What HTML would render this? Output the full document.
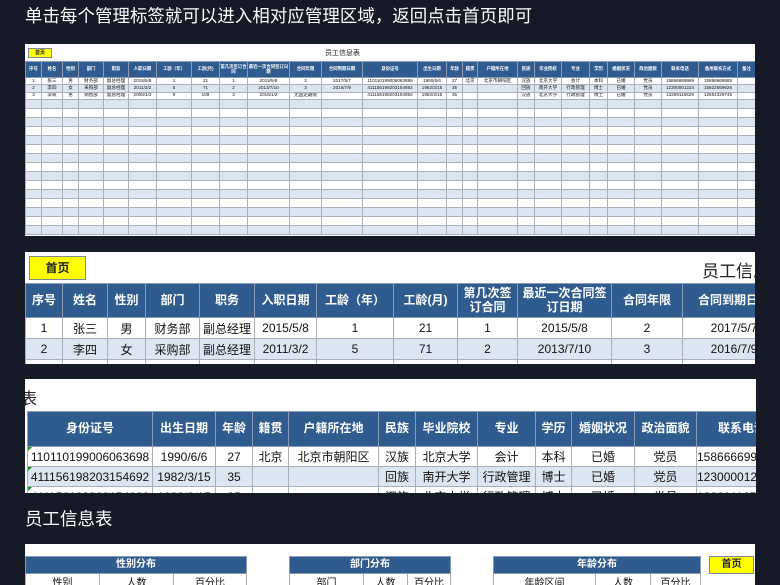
<!DOCTYPE html>
<html><head><meta charset="utf-8">
<style>
*{margin:0;padding:0;box-sizing:border-box}
body{width:780px;height:585px;overflow:hidden;background:#161a26;font-family:"Liberation Sans","Noto Sans CJK SC",sans-serif;position:relative}
.h{position:absolute;color:#fff;font-size:17.4px;white-space:nowrap;letter-spacing:0.1px}
.p{position:absolute;background:#fff;overflow:hidden}
table{border-collapse:collapse;table-layout:fixed;position:absolute}
td,th{border:1px solid #a9b0bb;text-align:center;white-space:nowrap;overflow:hidden;color:#111}
th{background:#2f5b8f;color:#fff;font-weight:bold;border-color:#8a9bb3;white-space:normal;line-height:1.15}
tr.b td{background:#dce6f1}
.btn{position:absolute;background:#ffff00;border:1px solid #7d8a9a;text-align:center;font-weight:bold;color:#222}
.t1 td,.t1 th{font-size:4.6px;padding:0;line-height:1}
.t1 th{font-size:4.4px}
.t2 td,.t2 th{font-size:12px;padding:0}
.tri{position:absolute;width:0;height:0;border-top:4px solid #1a8a2a;border-right:4px solid transparent}
</style></head><body>
<div class="h" style="left:25px;top:3px">单击每个管理标签就可以进入相对应管理区域，返回点击首页即可</div>

<div class="p" style="left:25px;top:44px;width:730px;height:192px">
<div class="btn" style="left:3px;top:4px;width:24px;height:10px;font-size:5px;line-height:8px">首页</div>
<div style="position:absolute;left:300px;top:4px;font-size:7px;color:#222">员工信息表</div>
<table class="t1" style="left:0;top:17px;width:730px">
<colgroup><col style="width:16px"><col style="width:21px"><col style="width:16px"><col style="width:25px"><col style="width:25px"><col style="width:28px"><col style="width:35px"><col style="width:28px"><col style="width:28px"><col style="width:42px"><col style="width:32px"><col style="width:41px"><col style="width:55px"><col style="width:29px"><col style="width:16px"><col style="width:15px"><col style="width:40px"><col style="width:17px"><col style="width:27px"><col style="width:28px"><col style="width:18px"><col style="width:27px"><col style="width:27px"><col style="width:37px"><col style="width:39px"><col style="width:18px"></colgroup>
<tr style="height:16px"><th>序号</th><th>姓名</th><th>性别</th><th>部门</th><th>职务</th><th>入职日期</th><th>工龄（年）</th><th>工龄(月)</th><th>第几次签订合同</th><th>最近一次合同签订日期</th><th>合同年限</th><th>合同到期日期</th><th>身份证号</th><th>出生日期</th><th>年龄</th><th>籍贯</th><th>户籍所在地</th><th>民族</th><th>毕业院校</th><th>专业</th><th>学历</th><th>婚姻状况</th><th>政治面貌</th><th>联系电话</th><th>备用联系方式</th><th>备注</th></tr>
<tr style="height:7.3px"><td>1</td><td>张三</td><td>男</td><td>财务部</td><td>副总经理</td><td>2015/5/8</td><td>1</td><td>21</td><td>1</td><td>2015/5/8</td><td>2</td><td>2017/5/7</td><td>110110199006063698</td><td>1990/6/6</td><td>27</td><td>北京</td><td>北京市朝阳区</td><td>汉族</td><td>北京大学</td><td>会计</td><td>本科</td><td>已婚</td><td>党员</td><td>15866669999</td><td>15866668888</td><td></td></tr>
<tr class="b" style="height:7.3px"><td>2</td><td>李四</td><td>女</td><td>采购部</td><td>副总经理</td><td>2011/3/2</td><td>5</td><td>71</td><td>2</td><td>2013/7/10</td><td>3</td><td>2016/7/9</td><td>411156198203154692</td><td>1982/3/15</td><td>35</td><td></td><td></td><td>回族</td><td>南开大学</td><td>行政管理</td><td>博士</td><td>已婚</td><td>党员</td><td>12300001234</td><td>15622569626</td><td></td></tr>
<tr style="height:7.3px"><td>3</td><td>李筱</td><td>男</td><td>销售部</td><td>副总经理</td><td>2008/1/2</td><td>9</td><td>109</td><td>3</td><td>2016/1/2</td><td>无固定期限</td><td></td><td>411156198203154692</td><td>1982/3/15</td><td>35</td><td></td><td></td><td>汉族</td><td>北京大学</td><td>行政管理</td><td>博士</td><td>已婚</td><td>党员</td><td>13269116529</td><td>12654329745</td><td></td></tr>
<tr class="b" style="height:9px"><td></td><td></td><td></td><td></td><td></td><td></td><td></td><td></td><td></td><td></td><td></td><td></td><td></td><td></td><td></td><td></td><td></td><td></td><td></td><td></td><td></td><td></td><td></td><td></td><td></td><td></td></tr>
<tr style="height:9px"><td></td><td></td><td></td><td></td><td></td><td></td><td></td><td></td><td></td><td></td><td></td><td></td><td></td><td></td><td></td><td></td><td></td><td></td><td></td><td></td><td></td><td></td><td></td><td></td><td></td><td></td></tr>
<tr class="b" style="height:9px"><td></td><td></td><td></td><td></td><td></td><td></td><td></td><td></td><td></td><td></td><td></td><td></td><td></td><td></td><td></td><td></td><td></td><td></td><td></td><td></td><td></td><td></td><td></td><td></td><td></td><td></td></tr>
<tr style="height:9px"><td></td><td></td><td></td><td></td><td></td><td></td><td></td><td></td><td></td><td></td><td></td><td></td><td></td><td></td><td></td><td></td><td></td><td></td><td></td><td></td><td></td><td></td><td></td><td></td><td></td><td></td></tr>
<tr class="b" style="height:9px"><td></td><td></td><td></td><td></td><td></td><td></td><td></td><td></td><td></td><td></td><td></td><td></td><td></td><td></td><td></td><td></td><td></td><td></td><td></td><td></td><td></td><td></td><td></td><td></td><td></td><td></td></tr>
<tr style="height:9px"><td></td><td></td><td></td><td></td><td></td><td></td><td></td><td></td><td></td><td></td><td></td><td></td><td></td><td></td><td></td><td></td><td></td><td></td><td></td><td></td><td></td><td></td><td></td><td></td><td></td><td></td></tr>
<tr class="b" style="height:9px"><td></td><td></td><td></td><td></td><td></td><td></td><td></td><td></td><td></td><td></td><td></td><td></td><td></td><td></td><td></td><td></td><td></td><td></td><td></td><td></td><td></td><td></td><td></td><td></td><td></td><td></td></tr>
<tr style="height:9px"><td></td><td></td><td></td><td></td><td></td><td></td><td></td><td></td><td></td><td></td><td></td><td></td><td></td><td></td><td></td><td></td><td></td><td></td><td></td><td></td><td></td><td></td><td></td><td></td><td></td><td></td></tr>
<tr class="b" style="height:9px"><td></td><td></td><td></td><td></td><td></td><td></td><td></td><td></td><td></td><td></td><td></td><td></td><td></td><td></td><td></td><td></td><td></td><td></td><td></td><td></td><td></td><td></td><td></td><td></td><td></td><td></td></tr>
<tr style="height:9px"><td></td><td></td><td></td><td></td><td></td><td></td><td></td><td></td><td></td><td></td><td></td><td></td><td></td><td></td><td></td><td></td><td></td><td></td><td></td><td></td><td></td><td></td><td></td><td></td><td></td><td></td></tr>
<tr class="b" style="height:9px"><td></td><td></td><td></td><td></td><td></td><td></td><td></td><td></td><td></td><td></td><td></td><td></td><td></td><td></td><td></td><td></td><td></td><td></td><td></td><td></td><td></td><td></td><td></td><td></td><td></td><td></td></tr>
<tr style="height:9px"><td></td><td></td><td></td><td></td><td></td><td></td><td></td><td></td><td></td><td></td><td></td><td></td><td></td><td></td><td></td><td></td><td></td><td></td><td></td><td></td><td></td><td></td><td></td><td></td><td></td><td></td></tr>
<tr class="b" style="height:9px"><td></td><td></td><td></td><td></td><td></td><td></td><td></td><td></td><td></td><td></td><td></td><td></td><td></td><td></td><td></td><td></td><td></td><td></td><td></td><td></td><td></td><td></td><td></td><td></td><td></td><td></td></tr>
<tr style="height:9px"><td></td><td></td><td></td><td></td><td></td><td></td><td></td><td></td><td></td><td></td><td></td><td></td><td></td><td></td><td></td><td></td><td></td><td></td><td></td><td></td><td></td><td></td><td></td><td></td><td></td><td></td></tr>
<tr class="b" style="height:9px"><td></td><td></td><td></td><td></td><td></td><td></td><td></td><td></td><td></td><td></td><td></td><td></td><td></td><td></td><td></td><td></td><td></td><td></td><td></td><td></td><td></td><td></td><td></td><td></td><td></td><td></td></tr>
</table>
</div>

<div class="p" style="left:25px;top:252px;width:730px;height:112px">
<div class="btn" style="left:4px;top:4px;width:57px;height:24px;font-size:12px;line-height:22px">首页</div>
<div style="position:absolute;left:677px;top:5px;font-size:17px;color:#222;white-space:nowrap">员工信息表</div>
<table class="t2" style="left:0;top:31px;width:760px">
<colgroup><col style="width:37px"><col style="width:45px"><col style="width:38px"><col style="width:54px"><col style="width:55px"><col style="width:62px"><col style="width:77px"><col style="width:64px"><col style="width:60px"><col style="width:94px"><col style="width:71px"><col style="width:103px"></colgroup>
<tr style="height:34px"><th>序号</th><th>姓名</th><th>性别</th><th>部门</th><th>职务</th><th>入职日期</th><th>工龄（年）</th><th>工龄(月)</th><th>第几次签订合同</th><th>最近一次合同签订日期</th><th>合同年限</th><th>合同到期日期</th></tr>
<tr style="height:21px"><td>1</td><td>张三</td><td>男</td><td>财务部</td><td>副总经理</td><td>2015/5/8</td><td>1</td><td>21</td><td>1</td><td>2015/5/8</td><td>2</td><td>2017/5/7</td></tr>
<tr class="b" style="height:21px"><td>2</td><td>李四</td><td>女</td><td>采购部</td><td>副总经理</td><td>2011/3/2</td><td>5</td><td>71</td><td>2</td><td>2013/7/10</td><td>3</td><td>2016/7/9</td></tr>
<tr style="height:21px"><td>3</td><td>李筱</td><td>男</td><td>销售部</td><td>副总经理</td><td>2008/1/2</td><td>9</td><td>109</td><td>3</td><td>2016/1/2</td><td>无固定期限</td><td></td></tr>
</table>
</div>

<div class="p" style="left:25px;top:379px;width:731px;height:114px">
<div style="position:absolute;left:-4px;top:6px;font-size:16px;color:#222">表</div>
<table class="t2" style="left:2px;top:32px;width:760px">
<colgroup><col style="width:125px"><col style="width:63px"><col style="width:37px"><col style="width:36px"><col style="width:90px"><col style="width:37px"><col style="width:62px"><col style="width:58px"><col style="width:36px"><col style="width:63px"><col style="width:62px"><col style="width:91px"></colgroup>
<tr style="height:35px"><th>身份证号</th><th>出生日期</th><th>年龄</th><th>籍贯</th><th>户籍所在地</th><th>民族</th><th>毕业院校</th><th>专业</th><th>学历</th><th>婚姻状况</th><th>政治面貌</th><th>联系电话</th></tr>
<tr style="height:20px"><td>110110199006063698</td><td>1990/6/6</td><td>27</td><td>北京</td><td>北京市朝阳区</td><td>汉族</td><td>北京大学</td><td>会计</td><td>本科</td><td>已婚</td><td>党员</td><td style="text-align:left">15866669999</td></tr>
<tr class="b" style="height:20px"><td>411156198203154692</td><td>1982/3/15</td><td>35</td><td></td><td></td><td>回族</td><td>南开大学</td><td>行政管理</td><td>博士</td><td>已婚</td><td>党员</td><td style="text-align:left">12300001234</td></tr>
<tr style="height:20px"><td>411156198203154692</td><td>1982/3/15</td><td>35</td><td></td><td></td><td>汉族</td><td>北京大学</td><td>行政管理</td><td>博士</td><td>已婚</td><td>党员</td><td style="text-align:left">13269116529</td></tr>
</table>
<div class="tri" style="left:3px;top:68px"></div>
<div class="tri" style="left:3px;top:88px"></div>
<div class="tri" style="left:3px;top:108px"></div>
</div>

<div class="h" style="left:25px;top:506px">员工信息表</div>

<div class="p" style="left:25px;top:544px;width:730px;height:41px">
<table class="t2" style="left:0;top:12px;width:221px">
<colgroup><col style="width:74px"><col style="width:74px"><col style="width:73px"></colgroup>
<tr style="height:17px"><th colspan="3" style="font-size:10px">性别分布</th></tr>
<tr style="height:14px"><td style="font-size:10px">性别</td><td style="font-size:10px">人数</td><td style="font-size:10px">百分比</td></tr>
</table>
<table class="t2" style="left:264px;top:12px;width:161px">
<colgroup><col style="width:74px"><col style="width:44px"><col style="width:43px"></colgroup>
<tr style="height:17px"><th colspan="3" style="font-size:10px">部门分布</th></tr>
<tr style="height:14px"><td style="font-size:10px">部门</td><td style="font-size:10px">人数</td><td style="font-size:10px">百分比</td></tr>
</table>
<table class="t2" style="left:468px;top:12px;width:207px">
<colgroup><col style="width:102px"><col style="width:55px"><col style="width:50px"></colgroup>
<tr style="height:17px"><th colspan="3" style="font-size:10px">年龄分布</th></tr>
<tr style="height:14px"><td style="font-size:10px">年龄区间</td><td style="font-size:10px">人数</td><td style="font-size:10px">百分比</td></tr>
</table>
<div class="btn" style="left:684px;top:12px;width:45px;height:18px;font-size:10px;line-height:16px">首页</div>
</div>
</body></html>
